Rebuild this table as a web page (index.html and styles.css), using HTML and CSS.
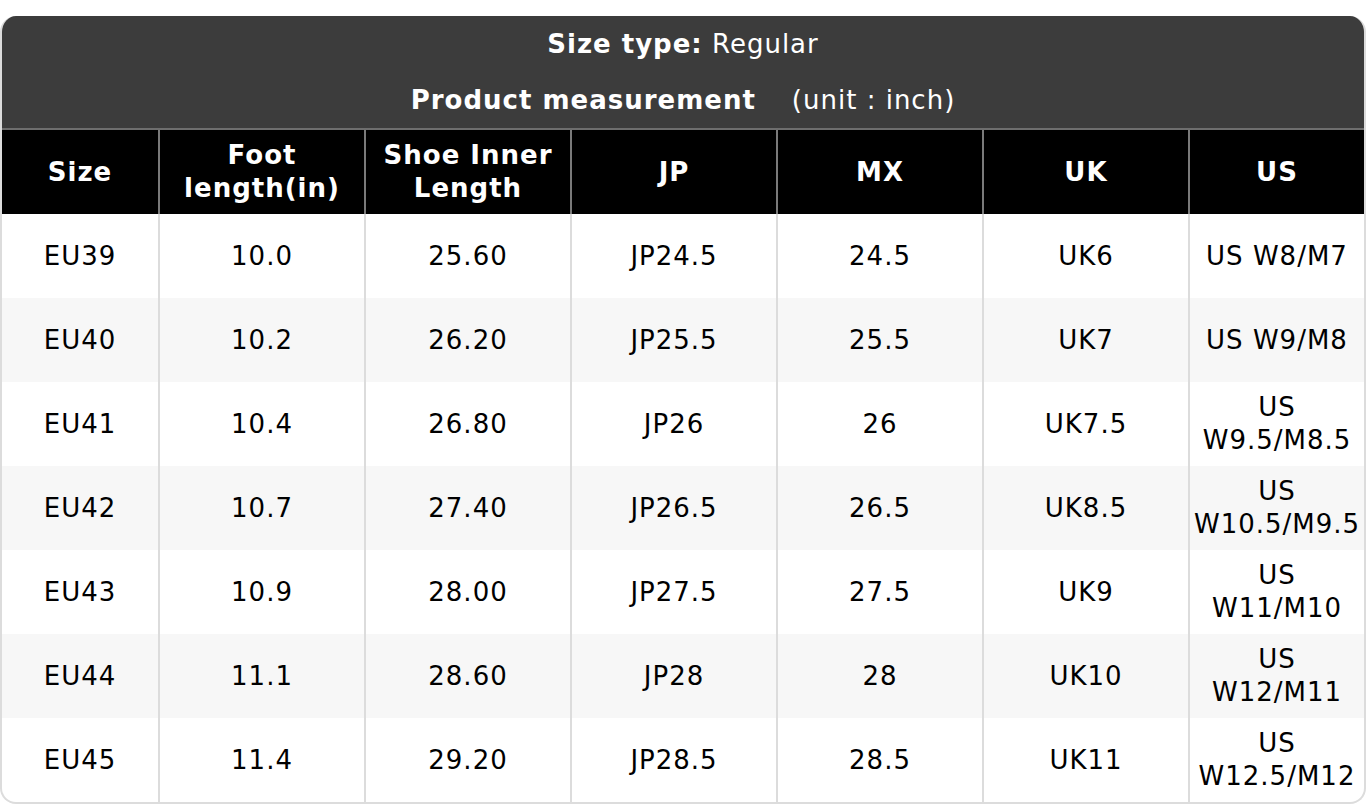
FILE: index.html
```html
<!DOCTYPE html>
<html>
<head>
<meta charset="utf-8">
<link rel="stylesheet" href="styles.css">
</head>
<body>
<div class="chart">
  <div class="title">
    <div class="title-line"><b>Size type:</b> Regular</div>
    <div class="title-line"><b>Product measurement</b><span class="unit">(unit : inch)</span></div>
  </div>
  <table class="sizes">
    <colgroup>
      <col class="c-first"><col class="c-mid"><col class="c-mid"><col class="c-mid"><col class="c-mid"><col class="c-mid"><col>
    </colgroup>
    <thead>
      <tr><th>Size</th><th>Foot length(in)</th><th>Shoe Inner Length</th><th>JP</th><th>MX</th><th>UK</th><th>US</th></tr>
    </thead>
    <tbody>
      <tr><td>EU39</td><td>10.0</td><td>25.60</td><td>JP24.5</td><td>24.5</td><td>UK6</td><td>US W8/M7</td></tr>
      <tr><td>EU40</td><td>10.2</td><td>26.20</td><td>JP25.5</td><td>25.5</td><td>UK7</td><td>US W9/M8</td></tr>
      <tr><td>EU41</td><td>10.4</td><td>26.80</td><td>JP26</td><td>26</td><td>UK7.5</td><td>US W9.5/M8.5</td></tr>
      <tr><td>EU42</td><td>10.7</td><td>27.40</td><td>JP26.5</td><td>26.5</td><td>UK8.5</td><td>US W10.5/M9.5</td></tr>
      <tr><td>EU43</td><td>10.9</td><td>28.00</td><td>JP27.5</td><td>27.5</td><td>UK9</td><td>US W11/M10</td></tr>
      <tr><td>EU44</td><td>11.1</td><td>28.60</td><td>JP28</td><td>28</td><td>UK10</td><td>US W12/M11</td></tr>
      <tr><td>EU45</td><td>11.4</td><td>29.20</td><td>JP28.5</td><td>28.5</td><td>UK11</td><td>US W12.5/M12</td></tr>
    </tbody>
  </table>
</div>
</body>
</html>
```

FILE: styles.css
```css
html, body {
  margin: 0;
  padding: 0;
  background: #ffffff;
}
body {
  padding-top: 16px;
  font-family: "DejaVu Sans", Verdana, sans-serif;
  letter-spacing: 1px;
}
.chart {
  width: 1366px;
  box-sizing: border-box;
  border: 2px solid #dcdcdc;
  border-top: none;
  border-radius: 16px;
  overflow: hidden;
}
.title {
  background: #3c3c3c;
  color: #ffffff;
  font-size: 26px;
  text-align: center;
  border-bottom: 2px solid #6e6e6e;
}
.title-line {
  height: 56px;
  line-height: 56px;
}
.unit {
  margin-left: 36px;
}
.sizes {
  width: 100%;
  table-layout: fixed;
  border-collapse: collapse;
  font-size: 26px;
  line-height: 33px;
}
.c-first { width: 157px; }
.c-mid { width: 206px; }
.sizes th {
  background: #000000;
  color: #ffffff;
  font-weight: bold;
  height: 84px;
  padding: 0 8px;
  border-left: 2px solid #7a7a7a;
  box-sizing: border-box;
}
.sizes th:first-child,
.sizes td:first-child { border-left: none; }
.sizes td {
  height: 84px;
  padding: 0 2px;
  text-align: center;
  color: #000000;
  border-left: 2px solid #dcdcdc;
  box-sizing: border-box;
}
.sizes tbody tr:nth-child(even) td { background: #f7f7f7; }
```
